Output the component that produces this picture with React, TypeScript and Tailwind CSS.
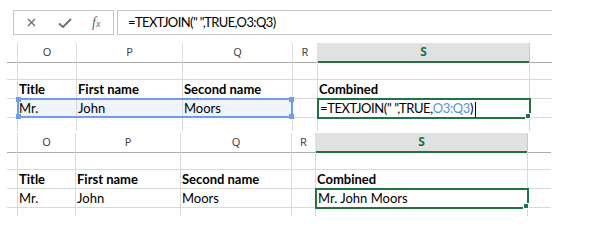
import React from "react";

const GRID_A = "grid grid-cols-[11px_59px_106px_110px_25px_212px_22px]";
const GRID_B = "grid grid-cols-[11px_58px_105px_111px_24px_212px_23px]";

const line = "border-[#d9d9d9]";
const cell = `border-r border-b ${line} flex items-end pl-[1px] pb-[1px] leading-[16px] whitespace-nowrap`;
const lastCell = `border-b ${line}`;

function HeaderRow({ grid, h }: { grid: string; h: string }) {
  const hd = `border-r border-b border-r-[#dedede] border-b-[#ababab] flex items-center justify-center text-[11px] text-[#444] font-['Noto_Sans']`;
  return (
    <div className={`${grid} ${h}`}>
      <div className="border-r border-b border-r-[#d9d9d9] border-b-[#ababab]" />
      <div className={hd}>O</div>
      <div className={hd}>P</div>
      <div className={hd}>Q</div>
      <div className={hd}>R</div>
      <div className="bg-[#e1e1e1] border-r border-r-[#c8c8c8] border-b-2 border-b-[#217346] flex items-center justify-center text-[12px] font-bold text-[#217346] font-['Noto_Sans']">
        S
      </div>
      <div className="border-b border-b-[#ababab]" />
    </div>
  );
}

function Row({
  grid,
  h,
  cells,
  blue,
  active,
}: {
  grid: string;
  h: string;
  cells: React.ReactNode[];
  blue?: boolean;
  active?: boolean;
}) {
  return (
    <div className={`${grid} ${h}`}>
      <div className={`border-r border-b ${line}`} />
      {cells.map((c, i) => {
        const isActive = active && i === 4;
        return (
          <div
            key={i}
            className={`${cell} ${blue && i < 3 ? "bg-[#eef3fc]" : ""} ${
              isActive ? "relative outline-2 outline-offset-[-1px] outline-[#217346]" : "overflow-hidden"
            }`}
          >
            {c}
            {isActive && (
              <span className="absolute -right-[2px] -bottom-[2px] w-[6px] h-[6px] bg-[#217346] border border-white" />
            )}
          </div>
        );
      })}
      <div className={lastCell} />
    </div>
  );
}

function Tail({ grid, h }: { grid: string; h: string }) {
  return (
    <div className={`${grid} ${h}`}>
      <div className={`border-r ${line}`} />
      <div className={`border-r ${line}`} />
      <div className={`border-r ${line}`} />
      <div className={`border-r ${line}`} />
      <div className={`border-r ${line}`} />
      <div className={`border-r ${line}`} />
      <div />
    </div>
  );
}

export default function App() {
  return (
    <div className="w-[600px] h-[241px] bg-white overflow-hidden pt-[10px] font-['Lato'] text-[13px] text-black">
      {/* formula bar */}
      <div className="flex h-[25px] pl-[13px]">
        <div className="w-[101px] h-full border border-[#c6c6c6] flex items-center">
          <svg className="ml-[13px]" width="9" height="9" viewBox="0 0 9 9">
            <path d="M1 1L8 8M8 1L1 8" stroke="#6f6f6f" strokeWidth="1.4" />
          </svg>
          <svg className="ml-[22px]" width="14" height="10" viewBox="0 0 14 10">
            <path d="M1 5.5L5 9L13 1" stroke="#6f6f6f" strokeWidth="1.9" fill="none" />
          </svg>
          <span className="ml-[20px] text-[#666] italic font-['Liberation_Serif'] text-[14px] leading-none">
            f<span className="text-[10px]">x</span>
          </span>
        </div>
        <div className="ml-[3px] w-[435px] h-full border-y border-l border-[#c6c6c6] flex items-center pl-[10px] whitespace-nowrap tracking-[-0.6px]">
          =TEXTJOIN(" ",TRUE,O3:Q3)
        </div>
      </div>

      {/* first sheet: editing */}
      <div className="relative ml-[7px] mt-[8px]">
        <HeaderRow grid={GRID_A} h="h-[19px]" />
        <Row grid={GRID_A} h="h-[18px]" cells={["", "", "", "", ""]} />
        <Row
          grid={GRID_A}
          h="h-[19px]"
          cells={[<b>Title</b>, <b>First name</b>, <b>Second name</b>, "", <b>Combined</b>]}
        />
        <Row
          grid={GRID_A}
          h="h-[19px]"
          blue
          active
          cells={[
            "Mr.",
            "John",
            "Moors",
            "",
            <span className="flex items-end pl-[1px] tracking-[-0.4px]">
              =TEXTJOIN(" ",TRUE,<span className="text-[#5b8fe0]">O3:Q3</span>)
              <span className="ml-[2px] mb-[-1px] w-px h-[15px] bg-black" />
            </span>,
          ]}
        />
        <Tail grid={GRID_A} h="h-[13px]" />

        {/* range reference highlight O3:Q3 */}
        <div className="absolute left-[10px] top-[55px] w-[276px] h-[20px] border-2 border-[#6f9ee8]">
          <span className="absolute -left-[3px] -top-[3px] w-[5px] h-[5px] bg-[#6f9ee8]" />
          <span className="absolute -right-[3px] -top-[3px] w-[5px] h-[5px] bg-[#6f9ee8]" />
          <span className="absolute -left-[3px] -bottom-[3px] w-[5px] h-[5px] bg-[#6f9ee8]" />
          <span className="absolute -right-[3px] -bottom-[3px] w-[5px] h-[5px] bg-[#6f9ee8]" />
        </div>
      </div>

      {/* second sheet: result */}
      <div className="ml-[7px] mt-[2px]">
        <HeaderRow grid={GRID_B} h="h-[18px]" />
        <Row grid={GRID_B} h="h-[19px]" cells={["", "", "", "", ""]} />
        <Row
          grid={GRID_B}
          h="h-[19px]"
          cells={[<b>Title</b>, <b>First name</b>, <b>Second name</b>, "", <b>Combined</b>]}
        />
        <Row
          grid={GRID_B}
          h="h-[19px]"
          active
          cells={["Mr.", "John", "Moors", "", <span className="pl-[1px]">Mr. John Moors</span>]}
        />
        <Tail grid={GRID_B} h="h-[8px]" />
      </div>
    </div>
  );
}
